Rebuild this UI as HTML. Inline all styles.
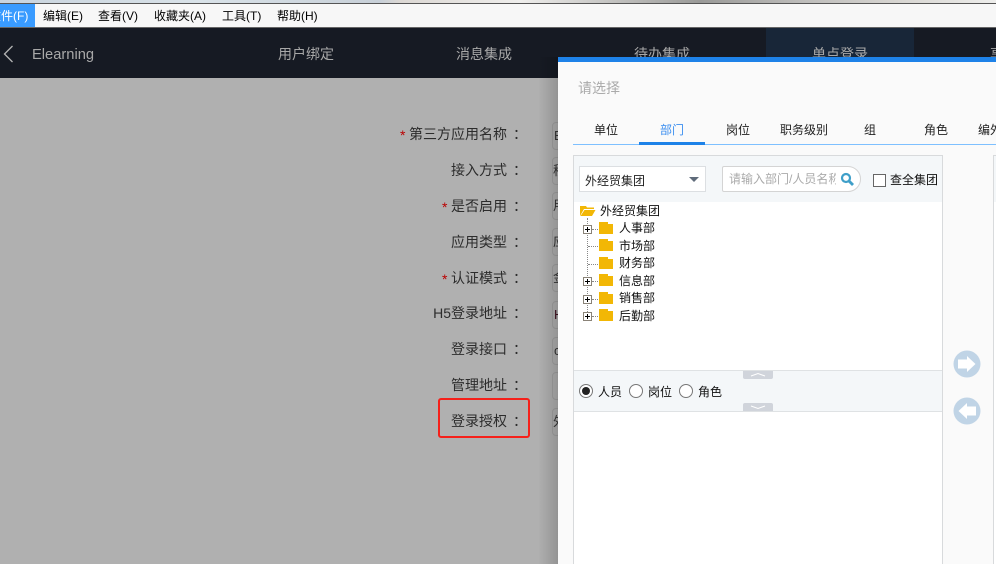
<!DOCTYPE html>
<html><head><meta charset="utf-8"><style>
html,body{margin:0;padding:0}
body{width:996px;height:564px;overflow:hidden;position:relative;background:#b0b0b0;font-family:"Liberation Sans","Noto Sans CJK SC",sans-serif}
div,span.a{position:absolute;box-sizing:border-box}
.t{white-space:nowrap;line-height:18px;height:18px}
.m{font-size:12px;color:#000;top:7px}
.n{font-size:14px;color:#a8a8a8;top:45px}
.tab{font-size:12px;color:#222;top:121px;width:66px;text-align:center}
.l{font-size:14px;color:#2c2c2c;right:489px;text-align:right}
.c{font-size:14px;color:#2c2c2c;left:513px}
.s{font-size:14px;color:#b00;}
.i{left:552px;width:20px;height:28px;border:1px solid #a0a0a0;border-radius:4px;font-size:13px;color:#333;line-height:26px;padding-left:1px;white-space:nowrap;overflow:hidden}
.tr{font-size:12px;color:#111;left:619px}
.f{left:599px;width:14px;height:12px;background:#f2b705}
.f:before{content:"";position:absolute;left:9px;top:0;width:5px;height:2px;background:#fff}
.v{left:587px;width:1px;border-left:1px dotted #888}
.h{height:1px;border-top:1px dotted #888;left:588px;width:10px}
.p{left:583px;width:9px;height:9px;border:1px solid #8a8378;background:#fff}
.p:before{content:"";position:absolute;left:1px;top:3px;width:5px;height:1px;background:#000}
.p:after{content:"";position:absolute;left:3px;top:1px;width:1px;height:5px;background:#000}
.r{width:14px;height:14px;border:1px solid #777;border-radius:50%;background:#fff;top:384px}
</style></head><body>
<div style="left:0;top:0;width:996px;height:3px;background:linear-gradient(90deg,#c9d4de 0,#d9e2e8 200px,#c8d0d8 380px,#dcd8d4 400px,#efeeec 520px,#9a9a98 700px,#bdbcba 800px,#d8d6d2 900px,#eeeeec 996px)"></div>
<div style="left:0;top:3px;width:996px;height:1px;background:#555"></div>
<div style="left:0;top:4px;width:996px;height:23px;background:#f7f7f7"></div>
<div style="left:0;top:4px;width:35px;height:23px;background:#399bff"></div>
<div class="t m" style="left:-11px;color:#fff">文件(F)</div>
<div class="t m" style="left:43px">编辑(E)</div>
<div class="t m" style="left:98px">查看(V)</div>
<div class="t m" style="left:154px">收藏夹(A)</div>
<div class="t m" style="left:222px">工具(T)</div>
<div class="t m" style="left:277px">帮助(H)</div>
<div style="left:0;top:27px;width:996px;height:1px;background:#666"></div>
<div style="left:0;top:28px;width:996px;height:50px;background:#161a23"></div>
<div style="left:766px;top:28px;width:148px;height:50px;background:#182638"></div>
<svg style="position:absolute;left:0;top:44px" width="16" height="20"><path d="M12.500 2 L4.500 10 L12.500 18" fill="none" stroke="#b4b4b4" stroke-width="1.300"/></svg>
<div class="t" style="left:32px;top:46px;font-size:14.700px;color:#a8a8a8">Elearning</div>
<div class="t n" style="left:278px">用户绑定</div>
<div class="t n" style="left:456px">消息集成</div>
<div class="t n" style="left:634px">待办集成</div>
<div class="t n" style="left:812px">单点登录</div>
<div class="t n" style="left:990px">享</div>

<div class="t s" style="left:400px;top:126px">*</div>
<div class="t l" style="top:125px">第三方应用名称</div><div class="t c" style="top:125px">：</div>
<div class="t l" style="top:161px">接入方式</div><div class="t c" style="top:161px">：</div>
<div class="t s" style="left:442px;top:198px">*</div>
<div class="t l" style="top:197px">是否启用</div><div class="t c" style="top:197px">：</div>
<div class="t l" style="top:233px">应用类型</div><div class="t c" style="top:233px">：</div>
<div class="t s" style="left:442px;top:270px">*</div>
<div class="t l" style="top:269px">认证模式</div><div class="t c" style="top:269px">：</div>
<div class="t l" style="top:304px">H5登录地址</div><div class="t c" style="top:304px">：</div>
<div class="t l" style="top:340px">登录接口</div><div class="t c" style="top:340px">：</div>
<div class="t l" style="top:376px">管理地址</div><div class="t c" style="top:376px">：</div>
<div class="t l" style="top:412px">登录授权</div><div class="t c" style="top:412px">：</div>

<div class="i" style="top:122px">E</div>
<div class="i" style="top:157px;padding-left:0">移</div>
<div class="i" style="top:192px;padding-left:0">用</div>
<div class="i" style="top:228px;padding-left:0">应</div>
<div class="i" style="top:264px;padding-left:0">金</div>
<div class="i" style="top:301px;color:#401020">H</div>
<div class="i" style="top:337px">c</div>
<div class="i" style="top:372px"></div>
<div class="i" style="top:408px;padding-left:0">外</div>

<div style="left:438px;top:398px;width:92px;height:40px;border:2px solid #f5201a;border-radius:3px"></div>

<div style="left:538px;top:57px;width:20px;height:507px;background:linear-gradient(90deg,rgba(0,0,0,0),rgba(0,0,0,.16))"></div>
<div style="left:558px;top:57px;width:438px;height:507px;background:#fafafa"></div>
<div style="left:558px;top:57px;width:438px;height:5px;background:#1e82e8"></div>
<div class="t" style="left:578px;top:79px;font-size:14px;color:#aaa">请选择</div>

<div class="t tab" style="left:573px">单位</div>
<div class="t tab" style="left:639px;color:#3c8ff0">部门</div>
<div class="t tab" style="left:705px">岗位</div>
<div class="t tab" style="left:771px">职务级别</div>
<div class="t tab" style="left:837px">组</div>
<div class="t tab" style="left:903px">角色</div>
<div class="t tab" style="left:978px;width:auto">编外</div>
<div style="left:573px;top:144px;width:423px;height:1px;background:#7ec0ff"></div>
<div style="left:639px;top:142px;width:66px;height:3px;background:#1e82e8"></div>

<div style="left:573px;top:155px;width:370px;height:409px;border:1px solid #d8dadc;border-bottom:0;background:#fff"></div>
<div style="left:574px;top:156px;width:368px;height:46px;background:#f4f7f9"></div>
<div style="left:993px;top:155px;width:3px;height:409px;border:1px solid #d8dadc;border-width:1px 0 0 1px;background:#fff"></div>
<div style="left:994px;top:156px;width:2px;height:46px;background:#f4f7f9"></div>

<div style="left:579px;top:166px;width:127px;height:26px;background:#fff;border:1px solid #dcdfe2"></div>
<div class="t" style="left:585px;top:172px;font-size:12px;color:#222">外经贸集团</div>
<div style="left:689px;top:177px;width:0;height:0;border-left:5px solid transparent;border-right:5px solid transparent;border-top:5px solid #5f6b7a"></div>

<div style="left:722px;top:166px;width:139px;height:26px;background:#fff;border:1px solid #d4d4d4;border-radius:2px 13px 13px 2px"></div>
<div class="t" style="left:729px;top:170px;width:107px;overflow:hidden;font-size:12px;color:#aaa">请输入部门/人员名称</div>
<svg style="position:absolute;left:840px;top:172px" width="14" height="14"><circle cx="6" cy="6" r="4" fill="none" stroke="#3f9fc9" stroke-width="2.200"/><path d="M9 9 L13 13" stroke="#3f9fc9" stroke-width="2.800"/></svg>

<div style="left:873px;top:174px;width:13px;height:13px;border:1px solid #666;background:#fff"></div>
<div class="t" style="left:890px;top:171px;font-size:12px;color:#111">查全集团</div>

<svg style="position:absolute;left:579px;top:205px" width="17" height="12"><path d="M1 1 H7 L8 2.500 H15 V4 H5 L1 11 Z" fill="#f2b705"/><path d="M5.500 5 H16.500 L13 11 H1.500 Z" fill="#f2b705"/></svg>
<div class="t tr" style="left:600px;top:202px">外经贸集团</div>

<div class="v" style="top:218px;height:98px"></div>
<div class="h" style="top:229px;left:592px;width:6px"></div>
<div class="h" style="top:246px"></div>
<div class="h" style="top:264px"></div>
<div class="h" style="top:281px;left:592px;width:6px"></div>
<div class="h" style="top:299px;left:592px;width:6px"></div>
<div class="h" style="top:316px;left:592px;width:6px"></div>
<div class="p" style="top:225px"></div>
<div class="p" style="top:277px"></div>
<div class="p" style="top:295px"></div>
<div class="p" style="top:312px"></div>
<div class="f" style="top:222px"></div><div class="t tr" style="top:219px">人事部</div>
<div class="f" style="top:239px"></div><div class="t tr" style="top:237px">市场部</div>
<div class="f" style="top:257px"></div><div class="t tr" style="top:254px">财务部</div>
<div class="f" style="top:274px"></div><div class="t tr" style="top:272px">信息部</div>
<div class="f" style="top:292px"></div><div class="t tr" style="top:289px">销售部</div>
<div class="f" style="top:309px"></div><div class="t tr" style="top:307px">后勤部</div>

<div style="left:574px;top:370px;width:368px;height:42px;background:#f4f7f9;border-top:1px solid #dfe2e4;border-bottom:1px solid #dfe2e4"></div>
<svg style="position:absolute;left:743px;top:371px" width="30" height="8"><path d="M0 0 H30 V6 Q30 8 28 8 H2 Q0 8 0 6 Z" fill="#d0d4db"/><path d="M8 5 L15 2.500 L22 5" fill="none" stroke="#fff"/></svg>
<svg style="position:absolute;left:743px;top:403px" width="30" height="8"><path d="M2 0 H28 Q30 0 30 2 V8 H0 V2 Q0 0 2 0 Z" fill="#d0d4db"/><path d="M8 3 L15 5.500 L22 3" fill="none" stroke="#fff"/></svg>

<div class="r" style="left:579px"></div>
<div style="left:582px;top:387px;width:8px;height:8px;border-radius:50%;background:#222"></div>
<div class="t" style="left:598px;top:383px;font-size:12px;color:#111">人员</div>
<div class="r" style="left:629px"></div>
<div class="t" style="left:648px;top:383px;font-size:12px;color:#111">岗位</div>
<div class="r" style="left:679px"></div>
<div class="t" style="left:698px;top:383px;font-size:12px;color:#111">角色</div>

<svg style="position:absolute;left:953px;top:350px" width="28" height="75">
<circle cx="14" cy="14" r="13.500" fill="#c0d4e6"/>
<path d="M5 9.500 H14 V6 L22.500 14 L14 22 V18.500 H5 Z" fill="#fff"/>
<circle cx="14" cy="61" r="13.500" fill="#c0d4e6"/>
<path d="M23 56.500 H14 V53 L5.500 61 L14 69 V65.500 H23 Z" fill="#fff"/>
</svg>
</body></html>
